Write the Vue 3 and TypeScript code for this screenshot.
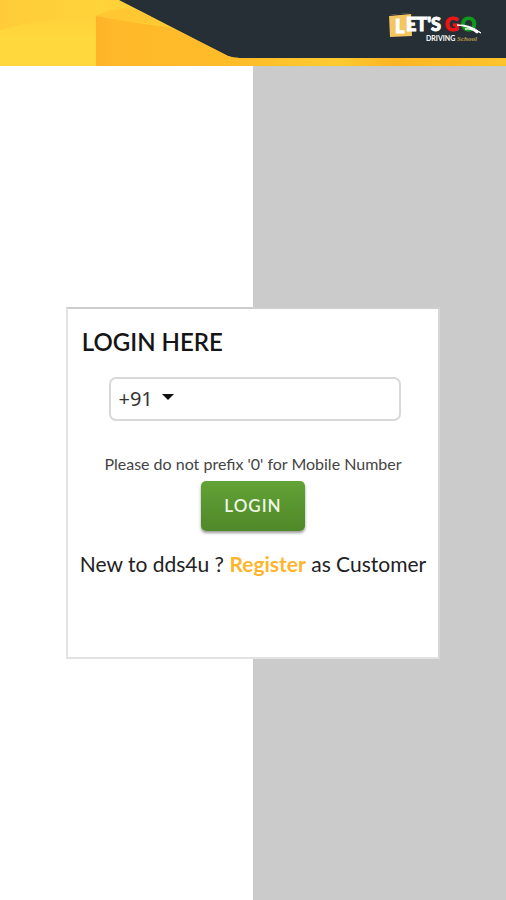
<script setup lang="ts">
import { ref } from 'vue'

const dialCodes: string[] = ['+91', '+1', '+44', '+61']
const dialCode = ref<string>('+91')
const mobile = ref<string>('')
</script>

<template>
  <div class="page">
    <header class="banner">
      <svg class="banner-art" viewBox="0 0 254 66" aria-hidden="true">
        <defs>
          <linearGradient id="base" x1="0" y1="0" x2="1" y2="0">
            <stop offset="0" stop-color="#ffcc38" />
            <stop offset="0.4" stop-color="#ffd33a" />
            <stop offset="1" stop-color="#ffc02b" />
          </linearGradient>
          <linearGradient id="fold" x1="0" y1="0" x2="1" y2="0">
            <stop offset="0" stop-color="#ffb225" />
            <stop offset="0.1" stop-color="#ffb92a" />
            <stop offset="1" stop-color="#ffbd29" />
          </linearGradient>
          <linearGradient id="light" x1="0" y1="0" x2="0" y2="1">
            <stop offset="0" stop-color="#ffd03a" />
            <stop offset="0.4" stop-color="#ffd83d" />
          </linearGradient>
        </defs>
        <path d="M0 0H119L228 56Q233 58 240 58H254V66H0Z" fill="url(#base)" />
        <path d="M0 30Q45 17 96 16V66H0Z" fill="url(#light)" />
        <path d="M96 16Q110 9 127 8L140 11L166 25Q130 22 96 16Z" fill="#ffc832" />
        <path d="M96 16Q130 22 172 28L228 56Q233 58 240 58H254V66H96Z" fill="url(#fold)" />
      </svg>
      <svg class="logo" viewBox="0 0 96 32" role="img" aria-label="Let's Go Driving School">
        <path d="M1 2L23 0L24 23L2 24Z" fill="#f3c660" />
        <path d="M1 2L23 0V1L1 3Z" fill="#16233a" />
        <text class="logo-main" x="7" y="20" fill="#fff" stroke="#fff">L</text>
        <text class="logo-main" x="18" y="18" fill="#fff" stroke="#fff">ET'S</text>
        <text class="logo-go" x="57" y="18" fill="#f01414" stroke="#f01414">G</text>
        <text class="logo-go" x="73" y="18" fill="#0f9a1c" stroke="#0f9a1c">O</text>
        <path d="M69 12Q82 11 93 20L89 18L90 20Q81 13 69 12Z" fill="#fff" stroke="#fff" />
        <path d="M77 16Q84 15 89 20" fill="none" stroke="#fff" stroke-width="1.4" />
        <text class="logo-sub" x="38" y="28" fill="#fff">DRIVING</text>
        <text class="logo-script" x="69" y="28" fill="#b89a4d">School</text>
      </svg>
    </header>

    <main class="stage">
      <form class="card" @submit.prevent>
        <h1 class="title">LOGIN HERE</h1>
        <div class="phone">
          <div class="code">
            <select v-model="dialCode" class="code-select" aria-label="Country code">
              <option v-for="code in dialCodes" :key="code" :value="code">{{ code }}</option>
            </select>
            <svg class="caret" viewBox="0 0 12 6" aria-hidden="true">
              <path d="M0 0H12L6 6Z" fill="#111" />
            </svg>
          </div>
          <input v-model="mobile" class="number" type="tel" aria-label="Mobile number" />
        </div>
        <p class="hint">Please do not prefix '0' for Mobile Number</p>
        <button class="submit" type="submit">LOGIN</button>
        <p class="signup">New to dds4u ? <a class="register" href="#register">Register</a> as Customer</p>
      </form>
    </main>
  </div>
</template>

<style>
body {
  margin: 0;
}
</style>

<style scoped>
.page {
  display: flex;
  flex-direction: column;
  min-height: 100vh;
  font-family: Lato, "Noto Sans", sans-serif;
  color: #222;
}

.banner {
  position: relative;
  display: flex;
  justify-content: flex-end;
  box-sizing: border-box;
  height: 66px;
  padding: 13px 22px 0 0;
  background: linear-gradient(90deg, #ffbe28 50%, #ffcb30 66%, #fbb524 78%, #ffc42c) bottom / 100% 8px no-repeat #272f36;
}

.banner-art {
  position: absolute;
  top: 0;
  left: 0;
  width: 254px;
  height: 66px;
}

.logo {
  position: relative;
  width: 96px;
  height: 32px;
}

.logo-main {
  font: 900 18px Lato, sans-serif;
}

.logo-go {
  font: 900 19px Lato, sans-serif;
}

.logo-sub {
  font: 700 7px Lato, sans-serif;
}

.logo-script {
  font: italic 700 7px "Liberation Serif", serif;
}

.stage {
  flex: 1;
  display: flex;
  align-items: center;
  justify-content: center;
  background: linear-gradient(90deg, #fff 50%, #cbcbcb 50%);
}

.card {
  display: flex;
  flex-direction: column;
  align-items: center;
  box-sizing: border-box;
  width: 74%;
  min-height: 352px;
  padding: 17px 14px;
  border: 2px solid #e2e2e2;
  border-top-color: #cecece;
  border-right-color: #d6d6d6;
  background: #fff;
}

.title {
  align-self: flex-start;
  margin: 0;
  font-size: 24px;
  font-weight: 600;
  line-height: 32px;
  color: #151515;
}

.phone {
  display: flex;
  box-sizing: border-box;
  width: 85%;
  height: 44px;
  margin: 19px 0 0 4px;
  border: 2px solid #d9d9d9;
  border-radius: 7px;
}

.code {
  display: flex;
  align-items: center;
  gap: 10px;
  padding-left: 7px;
}

.code-select {
  width: 34px;
  padding: 0;
  border: 0;
  appearance: none;
  background: transparent;
  font: 20px/28px "Noto Sans", sans-serif;
  color: #333;
}

.caret {
  width: 12px;
  height: 6px;
  margin-bottom: 4px;
}

.number {
  flex: 1;
  min-width: 0;
  padding: 0 8px;
  border: 0;
  background: transparent;
  font: 20px "Noto Sans", sans-serif;
  outline: none;
}

.hint {
  margin: 33px 0 7px;
  font-size: 16px;
  line-height: 20px;
  white-space: nowrap;
  color: #444;
}

.submit {
  width: 104px;
  height: 50px;
  padding: 0 0 2px;
  border: 0;
  border-radius: 5px;
  background: linear-gradient(#63a236, #4f8829);
  box-shadow: 0 2px 3px rgba(0, 0, 0, 0.4);
  font: 600 17px Lato, sans-serif;
  letter-spacing: 1px;
  color: #eef7e6;
}

.signup {
  margin: 19px 0 0;
  font-size: 21px;
  line-height: 28px;
  white-space: nowrap;
}

.register {
  font-weight: 700;
  text-decoration: none;
  color: #ffb52b;
}
</style>
